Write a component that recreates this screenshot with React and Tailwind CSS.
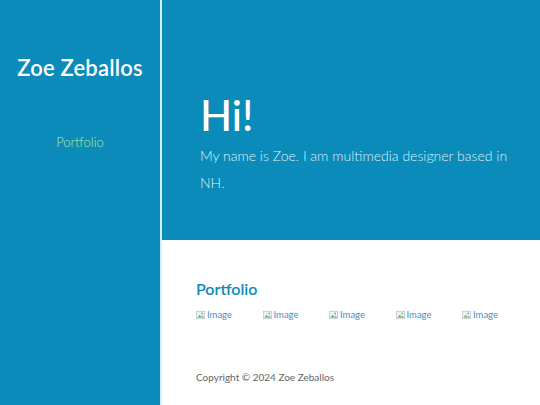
import React from 'react';

const BrokenImage = () => (
  <span className="flex items-center text-[9.5px] text-[#4a8fc4]">
    <svg width="10" height="10" viewBox="0 0 16 16" className="mr-[1px]">
      <rect x="1" y="2" width="13" height="12" fill="#eef2f4" stroke="#b0bac0" strokeWidth="1" />
      <path d="M2 12 L6 8 L9 11 L11 9 L13 12 Z" fill="#6aaa6a" />
      <circle cx="10" cy="5.5" r="1.5" fill="#7aaad6" />
    </svg>
    Image
  </span>
);

const App = () => {
  return (
    <div className="flex w-[540px] h-[405px] overflow-hidden bg-white" style={{ fontFamily: 'Lato, "Noto Sans", sans-serif' }}>
      {/* sidebar */}
      <aside className="w-[162px] shrink-0 bg-[#0a8bb9] border-r-2 border-[#d6eef8] flex flex-col items-center pt-[54px]">
        <h1 className="text-[22px] font-semibold text-white leading-[28px] tracking-[0.2px]">Zoe Zeballos</h1>
        <a className="mt-[51px] text-[13px] font-light text-[#b8e8a0]">Portfolio</a>
      </aside>

      <main className="flex-1 flex flex-col">
        <section className="h-[240px] bg-[#0a8bb9] pl-[38px] pt-[90px]">
          <h2 className="text-[42px] leading-[50px] font-medium text-white">Hi!</h2>
          <p className="mt-[2px] text-[14px] leading-[27px] font-light text-[#dff2fa] w-[330px]">
            My name is Zoe. I am multimedia designer based in NH.
          </p>
        </section>

        <section className="pl-[34px] pt-[38px]">
          <h3 className="text-[16px] font-semibold text-[#0a8bb9] leading-[22px]">Portfolio</h3>
          <div className="mt-[8px] flex">
            {[0, 1, 2, 3, 4].map(i => (
              <div key={i} className="w-[66.5px]">
                <BrokenImage />
              </div>
            ))}
          </div>
          <p className="mt-[48px] text-[10px] text-[#666666]">Copyright © 2024 Zoe Zeballos</p>
        </section>
      </main>
    </div>
  );
};

export default App;
